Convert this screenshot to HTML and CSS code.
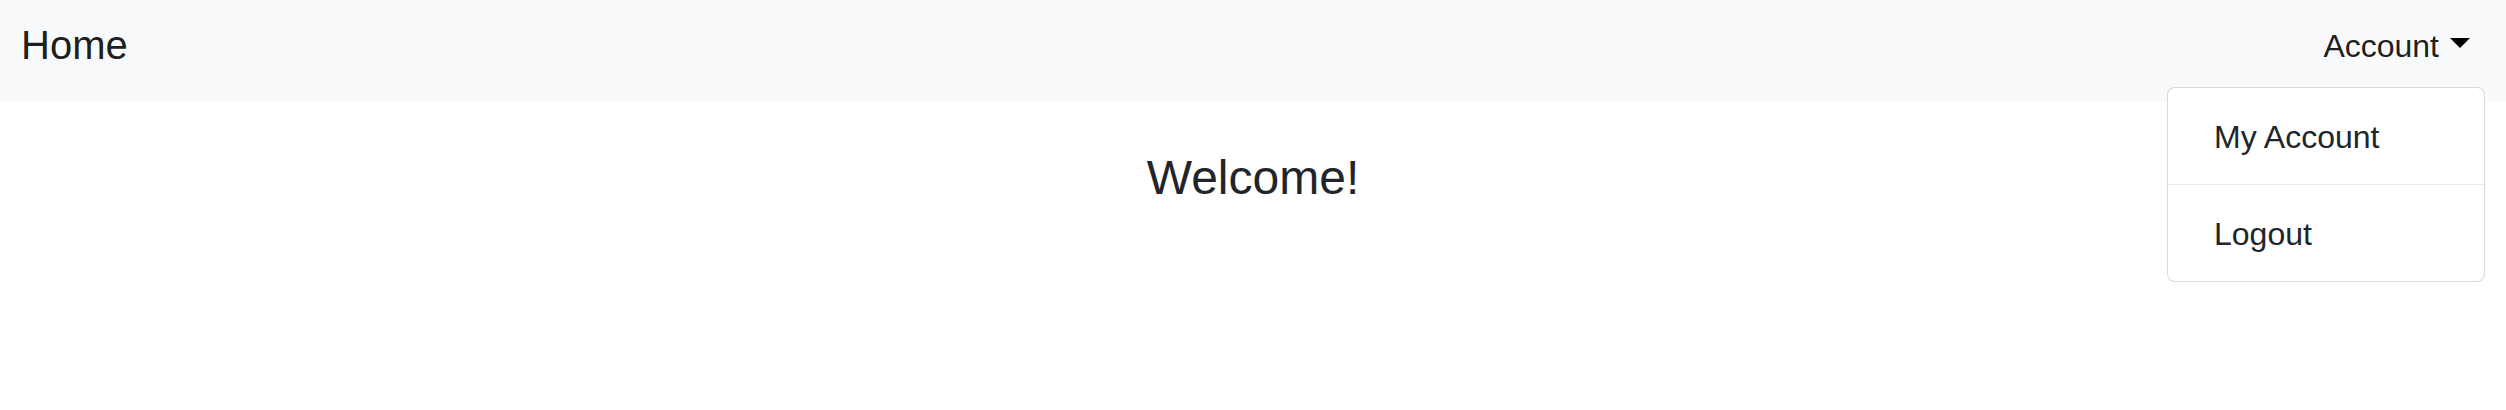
FILE: index.html
```html
<!DOCTYPE html>
<html lang="en">
<head>
<meta charset="utf-8">
<title>Home</title>
<link rel="stylesheet" href="styles.css">
</head>
<body>
<nav class="navbar">
  <a class="brand" href="#">Home</a>
  <div class="nav-item">
    <a class="nav-link" href="#">Account<span class="caret"></span></a>
    <div class="dropdown">
      <a class="dropdown-item" href="#">My Account</a>
      <div class="divider"></div>
      <a class="dropdown-item" href="#">Logout</a>
    </div>
  </div>
</nav>
<main class="content">
  <h4 class="welcome">Welcome!</h4>
</main>
</body>
</html>
```
FILE: styles.css
```css
* { box-sizing: border-box; }
html, body { margin: 0; padding: 0; }
body {
  font-family: "Liberation Sans", Arial, sans-serif;
  color: #212529;
  background: #fff;
}
a { text-decoration: none; }
.navbar {
  height: 102px;
  background: #f8f9fa;
  display: flex;
  justify-content: space-between;
  align-items: flex-start;
  padding: 0 36px 0 21px;
}
.brand {
  font-size: 40px;
  line-height: 60px;
  padding-top: 15px;
  color: rgba(0,0,0,.9);
}
.nav-item { position: static; }
.nav-link {
  display: flex;
  align-items: center;
  font-size: 32px;
  line-height: 48px;
  padding-top: 22px;
  color: rgba(0,0,0,.9);
}
.caret {
  display: inline-block;
  width: 0;
  height: 0;
  margin-left: 11px;
  margin-top: -6px;
  border-top: 10px solid #000;
  border-left: 10px solid transparent;
  border-right: 10px solid transparent;
}
.dropdown {
  position: absolute;
  top: 87px;
  right: 21px;
  width: 318px;
  background: #fff;
  border: 1px solid rgba(0,0,0,.15);
  border-radius: 8px;
  display: flex;
  flex-direction: column;
}
.dropdown-item {
  height: 96px;
  padding: 25px 46px 0;
  font-size: 32px;
  line-height: 48px;
  color: #212529;
}
.divider {
  height: 1px;
  background: #e9ecef;
}
.content { text-align: center; }
.welcome {
  margin: 47px 0 0;
  font-size: 48px;
  line-height: 58px;
  font-weight: 400;
}
```
